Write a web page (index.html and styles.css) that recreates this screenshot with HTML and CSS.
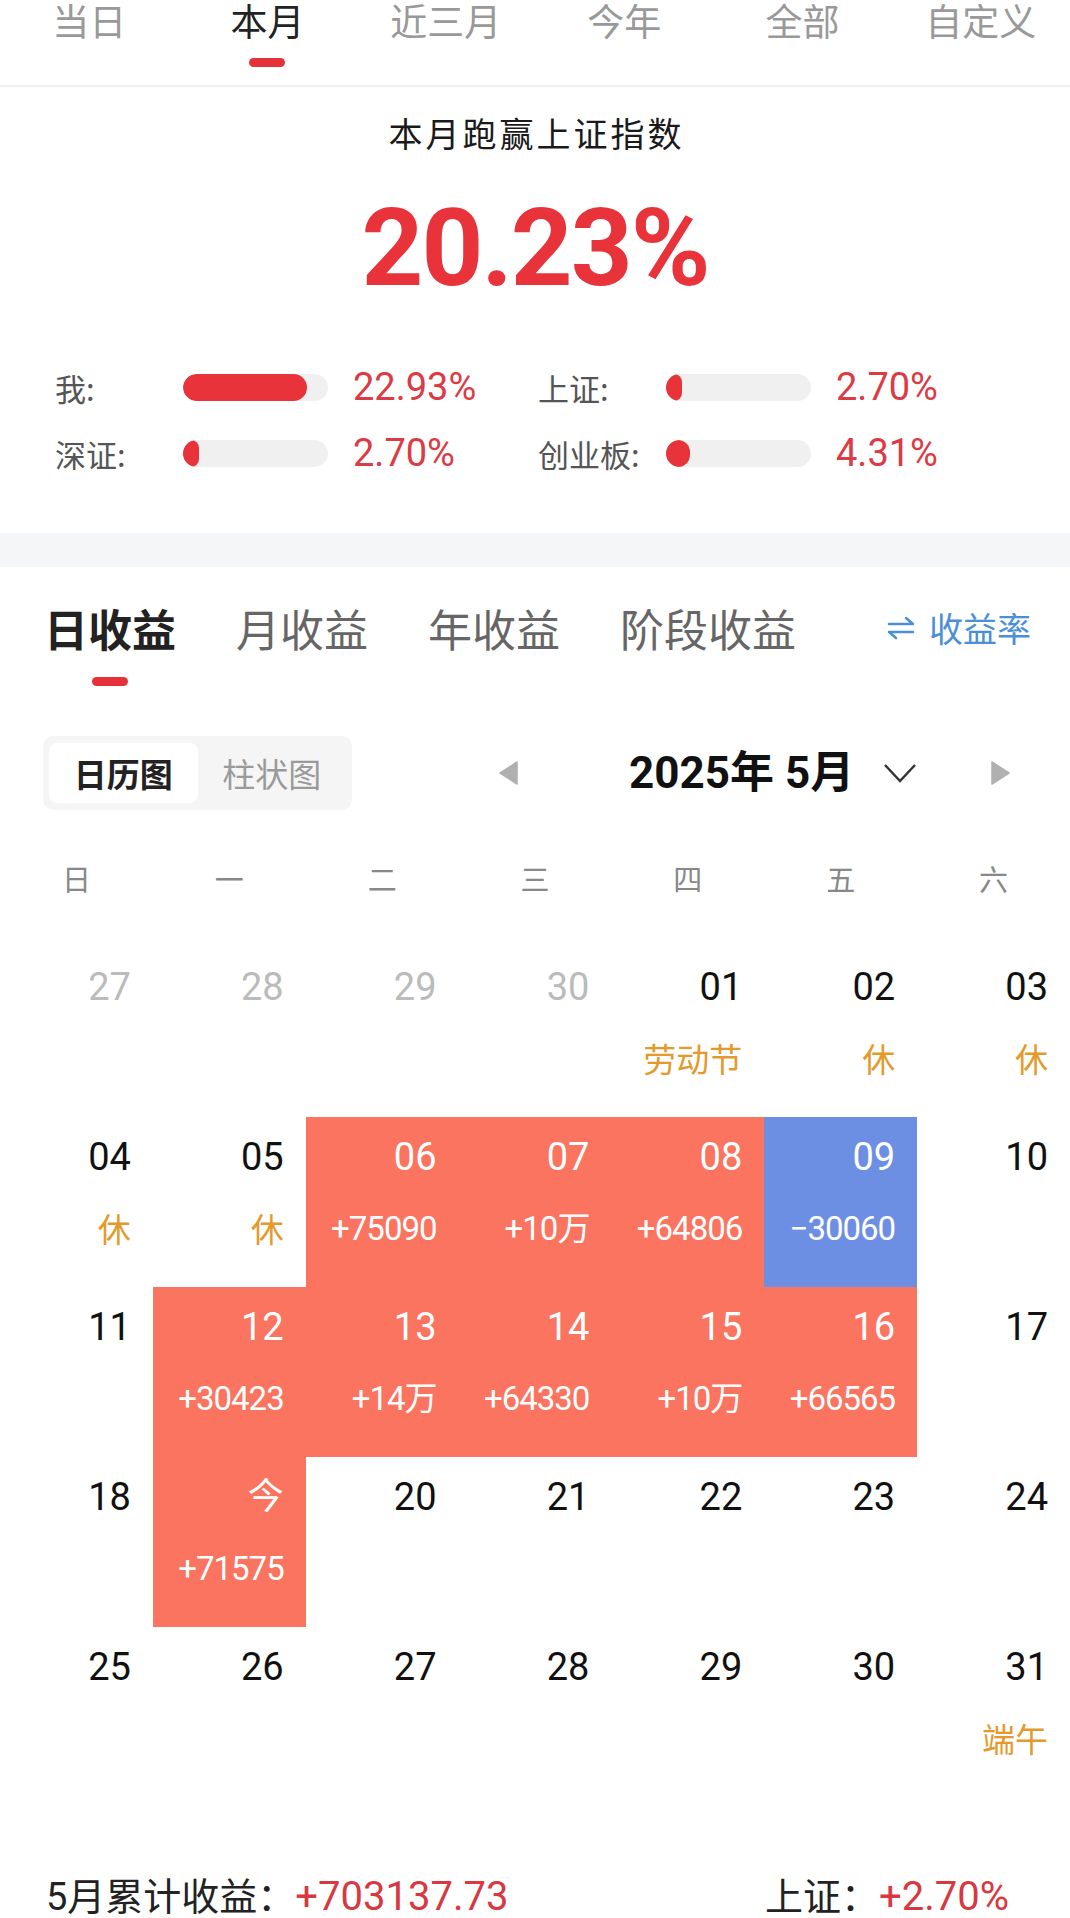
FILE: index.html
```html
<!DOCTYPE html>
<html lang="zh-CN">
<head>
<meta charset="utf-8">
<title>收益日历</title>
<link rel="stylesheet" href="styles.css">
</head>
<body>
<div class="page">
  <nav class="range-tabs">
    <div class="range-tab">当日</div>
    <div class="range-tab active">本月<div class="bar"></div></div>
    <div class="range-tab">近三月</div>
    <div class="range-tab">今年</div>
    <div class="range-tab">全部</div>
    <div class="range-tab">自定义</div>
  </nav>

  <section class="summary">
    <h1 class="summary-title">本月跑赢上证指数</h1>
    <div class="summary-value">20.23%</div>
    <div class="compare">
      <div class="cmp">
        <span class="cmp-label">我:</span>
        <div class="track"><div class="fill" style="width:124px"></div></div>
        <span class="cmp-val">22.93%</span>
      </div>
      <div class="cmp">
        <span class="cmp-label">上证:</span>
        <div class="track"><div class="fill" style="width:16px"></div></div>
        <span class="cmp-val">2.70%</span>
      </div>
      <div class="cmp">
        <span class="cmp-label">深证:</span>
        <div class="track"><div class="fill" style="width:16px"></div></div>
        <span class="cmp-val">2.70%</span>
      </div>
      <div class="cmp">
        <span class="cmp-label">创业板:</span>
        <div class="track"><div class="fill" style="width:24px"></div></div>
        <span class="cmp-val">4.31%</span>
      </div>
    </div>
  </section>

  <div class="band"></div>

  <section class="profit">
    <div class="profit-tabs">
      <div class="ptab active"><span>日收益</span><div class="bar"></div></div>
      <div class="ptab"><span>月收益</span><div class="bar"></div></div>
      <div class="ptab"><span>年收益</span><div class="bar"></div></div>
      <div class="ptab"><span>阶段收益</span><div class="bar"></div></div>
      <div class="rate-toggle">
        <svg class="swap-icon" width="28" height="24" viewBox="0 0 28 24"><path d="M2 8 H26 L19 2 M26 16 H2 L9 22" fill="none" stroke="#4a8fd8" stroke-width="2.5" stroke-linecap="round" stroke-linejoin="round"/></svg>
        <span>收益率</span>
      </div>
    </div>

    <div class="toolbar">
      <div class="seg">
        <div class="seg-item active">日历图</div>
        <div class="seg-item">柱状图</div>
      </div>
      <div class="month-nav">
        <svg class="nav-arrow" width="19" height="24" viewBox="0 0 19 24"><path d="M18 1 L1 12 L18 23 Z" fill="#b0b0b0" stroke="#b0b0b0" stroke-width="1.5" stroke-linejoin="round"/></svg>
        <span class="month-label">2025年 5月</span>
        <svg class="chevron" width="34" height="20" viewBox="0 0 34 20"><polyline points="2,2 17,18 32,2" fill="none" stroke="#333" stroke-width="2.5"/></svg>
        <svg class="nav-arrow next" width="19" height="24" viewBox="0 0 19 24"><path d="M1 1 L18 12 L1 23 Z" fill="#b0b0b0" stroke="#b0b0b0" stroke-width="1.5" stroke-linejoin="round"/></svg>
      </div>
    </div>

    <div class="weekdays">
      <span>日</span><span>一</span><span>二</span><span>三</span><span>四</span><span>五</span><span>六</span>
    </div>

    <div class="calendar">
      <div class="day prev"><span class="num">27</span></div>
      <div class="day prev"><span class="num">28</span></div>
      <div class="day prev"><span class="num">29</span></div>
      <div class="day prev"><span class="num">30</span></div>
      <div class="day"><span class="num">01</span><span class="sub">劳动节</span></div>
      <div class="day"><span class="num">02</span><span class="sub">休</span></div>
      <div class="day"><span class="num">03</span><span class="sub">休</span></div>

      <div class="day"><span class="num">04</span><span class="sub">休</span></div>
      <div class="day"><span class="num">05</span><span class="sub">休</span></div>
      <div class="day up"><span class="num">06</span><span class="amt">+75090</span></div>
      <div class="day up"><span class="num">07</span><span class="amt">+10万</span></div>
      <div class="day up"><span class="num">08</span><span class="amt">+64806</span></div>
      <div class="day down"><span class="num">09</span><span class="amt">−30060</span></div>
      <div class="day"><span class="num">10</span></div>

      <div class="day"><span class="num">11</span></div>
      <div class="day up"><span class="num">12</span><span class="amt">+30423</span></div>
      <div class="day up"><span class="num">13</span><span class="amt">+14万</span></div>
      <div class="day up"><span class="num">14</span><span class="amt">+64330</span></div>
      <div class="day up"><span class="num">15</span><span class="amt">+10万</span></div>
      <div class="day up"><span class="num">16</span><span class="amt">+66565</span></div>
      <div class="day"><span class="num">17</span></div>

      <div class="day"><span class="num">18</span></div>
      <div class="day up"><span class="num today">今</span><span class="amt">+71575</span></div>
      <div class="day"><span class="num">20</span></div>
      <div class="day"><span class="num">21</span></div>
      <div class="day"><span class="num">22</span></div>
      <div class="day"><span class="num">23</span></div>
      <div class="day"><span class="num">24</span></div>

      <div class="day"><span class="num">25</span></div>
      <div class="day"><span class="num">26</span></div>
      <div class="day"><span class="num">27</span></div>
      <div class="day"><span class="num">28</span></div>
      <div class="day"><span class="num">29</span></div>
      <div class="day"><span class="num">30</span></div>
      <div class="day"><span class="num">31</span><span class="sub">端午</span></div>
    </div>

    <div class="total">
      <div class="total-left"><span class="total-label">5月累计收益：</span><span class="total-val">+703137.73</span></div>
      <div class="total-right"><span class="total-label">上证：</span><span class="total-val">+2.70%</span></div>
    </div>
  </section>
</div>
</body>
</html>
```

FILE: styles.css
```css
* { box-sizing: border-box; margin: 0; padding: 0; }
html, body { background: #fff; }
body { margin: 0; font-family: "Noto Sans CJK SC", sans-serif; color: #222; }
.page { width: 1070px; height: 1918px; overflow: hidden; }

/* top range tabs */
.range-tabs {
  display: grid;
  grid-template-columns: repeat(6, 1fr);
  height: 87px;
  border-bottom: 2px solid #f1f1f1;
}
.range-tab {
  text-align: center;
  font-size: 37px;
  line-height: 40px;
  color: #999;
}
.range-tab.active { color: #222; }
.range-tab .bar {
  width: 36px;
  height: 9px;
  border-radius: 5px;
  background: #e5323a;
  margin: 18px auto 0;
}

/* summary */
.summary { padding: 26px 0 58px; }
.summary-title {
  font-size: 34px;
  font-weight: 400;
  line-height: 40px;
  letter-spacing: 3px;
  padding-left: 3px;
  text-align: center;
  color: #1a1a1a;
}
.summary-value {
  font-family: Roboto, sans-serif;
  font-weight: 700;
  font-size: 108px;
  line-height: 120px;
  letter-spacing: -2px;
  margin-top: 35px;
  text-align: center;
  color: #e8333a;
}
.compare {
  display: grid;
  grid-template-columns: 483px 1fr;
  row-gap: 22px;
  padding-left: 55px;
  margin-top: 57px;
}
.cmp { display: flex; align-items: center; height: 44px; }
.cmp-label { width: 128px; font-size: 31px; color: #555; }
.track {
  width: 145px;
  height: 27px;
  border-radius: 14px;
  background: #f0f0f0;
  overflow: hidden;
}
.fill { height: 100%; border-radius: 14px; background: #e8333a; }
.cmp-val {
  margin-left: 25px;
  font-family: Roboto, sans-serif;
  font-size: 38px;
  line-height: 44px;
  color: #dc3a44;
}

.band { height: 34px; background: #f5f6f8; }

/* profit section */
.profit { padding-top: 31px; }
.profit-tabs {
  display: flex;
  align-items: flex-start;
  gap: 60px;
  padding: 0 39px 0 44px;
}
.ptab {
  display: flex;
  flex-direction: column;
  align-items: center;
  font-size: 44px;
  line-height: 60px;
  color: #666;
}
.ptab .bar {
  width: 36px;
  height: 9px;
  border-radius: 5px;
  margin-top: 19px;
  background: transparent;
}
.ptab.active { color: #222; font-weight: 700; }
.ptab.active .bar { background: #e5323a; }
.rate-toggle {
  margin-left: auto;
  display: flex;
  align-items: center;
  gap: 14px;
  font-size: 34px;
  line-height: 60px;
  color: #4a8fd8;
}

.toolbar {
  display: flex;
  align-items: center;
  height: 74px;
  margin-top: 50px;
  padding-left: 43px;
}
.seg {
  display: flex;
  width: 309px;
  height: 74px;
  padding: 7px 6px;
  background: #f5f5f5;
  border-radius: 10px;
}
.seg-item {
  flex: 1;
  text-align: center;
  font-size: 33px;
  line-height: 60px;
  color: #9a9a9a;
  border-radius: 8px;
}
.seg-item.active { background: #fff; color: #222; font-weight: 700; }

.month-nav { display: flex; align-items: center; margin-left: 147px; }
.nav-arrow { display: block; }
.month-label {
  margin-left: 111px;
  font-family: Roboto, "Noto Sans CJK SC", sans-serif;
  font-weight: 700;
  font-size: 44px;
  line-height: 60px;
  color: #111;
}
.chevron { display: block; margin-left: 29px; }
.nav-arrow.next { margin-left: 74px; }

.weekdays {
  display: grid;
  grid-template-columns: repeat(7, 1fr);
  margin-top: 48px;
}
.weekdays span {
  text-align: center;
  font-size: 29px;
  line-height: 40px;
  color: #888;
}

.calendar {
  display: grid;
  grid-template-columns: repeat(7, 1fr);
  grid-auto-rows: 170px;
  margin-top: 49px;
}
.day { padding: 18px 22px 0 0; text-align: right; }
.day .num {
  display: block;
  font-family: Roboto, "Noto Sans CJK SC", sans-serif;
  font-size: 38px;
  line-height: 44px;
  color: #111;
}
.day .num.today { font-size: 36px; }
.day .sub {
  display: block;
  margin-top: 29px;
  font-size: 33px;
  line-height: 40px;
  color: #e39a2b;
}
.day .amt {
  display: block;
  margin-top: 30px;
  font-family: Roboto, "Noto Sans CJK SC", sans-serif;
  font-size: 33px;
  letter-spacing: -1px;
  line-height: 40px;
  color: #fff;
}
.day.prev .num { color: #bbb; }
.day.up { background: #fa7460; }
.day.down { background: #6d8fe3; }
.day.up .num, .day.down .num { color: #fff; }

.total {
  display: flex;
  justify-content: space-between;
  align-items: center;
  height: 48px;
  margin-top: 72px;
  padding: 0 61px 0 46px;
}
.total-label {
  font-family: Roboto, "Noto Sans CJK SC", sans-serif;
  font-size: 38px;
  color: #222;
}
.total-val {
  font-family: Roboto, sans-serif;
  font-size: 40px;
  color: #d8383f;
}
```
